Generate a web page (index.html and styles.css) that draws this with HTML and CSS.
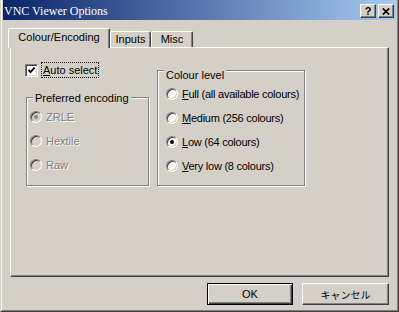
FILE: index.html
```html
<!DOCTYPE html>
<html lang="en">
<head>
    <meta charset="UTF-8">
    <title>VNC Viewer Options</title>
    <link rel="stylesheet" href="styles.css">
</head>
<body>
    <div class="window">
        <div class="frame">
            <div class="titlebar">
                <span class="title">VNC Viewer Options</span>
                <div class="caption-buttons">
                    <span class="cap-btn">?</span>
                    <span class="cap-btn">
                        <svg width="8" height="7" viewBox="0 0 8 7"><path d="M0.8 0.5 L7.2 6.5 M7.2 0.5 L0.8 6.5" stroke="#000" stroke-width="1.7" fill="none"/></svg>
                    </span>
                </div>
            </div>

            <div class="client">
                <div class="tabs">
                    <div class="tab active">Colour/Encoding</div>
                    <div class="tab">Inputs</div>
                    <div class="tab tab-misc">Misc</div>
                </div>

                <div class="panel">
                    <div class="col-left">
                        <div class="check-row">
                            <span class="checkbox">
                                <svg width="7" height="7" viewBox="0 0 7 7"><path d="M0.5 3 L2.5 5.2 L6.6 0.6" stroke="#000" stroke-width="1.9" fill="none"/></svg>
                            </span>
                            <span class="focus"><u>A</u>uto select</span>
                        </div>

                        <div class="group group-enc">
                            <div class="legend">Preferred encoding</div>
                            <div class="opt disabled"><span class="radio on"></span>ZRLE</div>
                            <div class="opt disabled"><span class="radio"></span>Hextile</div>
                            <div class="opt disabled"><span class="radio"></span>Raw</div>
                        </div>
                    </div>

                    <div class="col-right">
                        <div class="group group-colour">
                            <div class="legend">Colour level</div>
                            <div class="opt"><span class="radio"></span><span><u>F</u>ull (all available colours)</span></div>
                            <div class="opt"><span class="radio"></span><span><u>M</u>edium (256 colours)</span></div>
                            <div class="opt"><span class="radio on"></span><span><u>L</u>ow (64 colours)</span></div>
                            <div class="opt"><span class="radio"></span><span><u>V</u>ery low (8 colours)</span></div>
                        </div>
                    </div>
                </div>

                <div class="buttons">
                    <div class="btn default">OK</div>
                    <div class="btn btn-jp">キャンセル</div>
                </div>
            </div>
        </div>
    </div>
</body>
</html>
```

FILE: styles.css
```css
body {
    margin: 0;
    font-family: "Liberation Sans", Arial, sans-serif;
    font-size: 11px;
    color: #000;
    background: #d4d0c8;
}
.window {
    width: 399px;
    height: 312px;
    box-sizing: border-box;
    border-left: 1px solid #d4d0c8;
    border-right: 1px solid #404040;
    border-bottom: 1px solid #404040;
}
.frame {
    height: 100%;
    box-sizing: border-box;
    border-left: 1px solid #fff;
    border-right: 1px solid #808080;
    border-bottom: 1px solid #808080;
    padding: 0 1px 1px;
}
.titlebar {
    height: 20px;
    display: flex;
    justify-content: space-between;
    padding: 0 2px 0 1px;
    background: linear-gradient(90deg, #0a246a, #a6caf0);
}
.title {
    color: #fff;
    font-family: "Liberation Serif", "Times New Roman", serif;
    font-size: 12px;
    line-height: 20px;
    padding-top: 1px;
}
.caption-buttons {
    display: flex;
    gap: 2px;
    align-self: flex-end;
    margin-bottom: 2px;
}
.cap-btn {
    width: 16px;
    height: 14px;
    box-sizing: border-box;
    border: 1px solid;
    border-color: #fff #404040 #404040 #fff;
    box-shadow: inset -1px -1px #808080;
    background: #d4d0c8;
    display: flex;
    align-items: center;
    justify-content: center;
    font-weight: bold;
    font-size: 11px;
    line-height: 1;
}
.client {
    padding: 8px 7px 0;
}
.tabs {
    display: flex;
    align-items: flex-end;
    height: 19px;
}
.tab {
    width: 41px;
    height: 16px;
    box-sizing: border-box;
    text-align: center;
    line-height: 15px;
    border: 1px solid;
    border-bottom: none;
    border-color: #fff #404040 transparent #fff;
    box-shadow: inset -1px 0 #808080;
    border-radius: 2px 2px 0 0;
    background: #d4d0c8;
}
.tab-misc {
    width: 42px;
}
.tab.active {
    width: 102px;
    height: 20px;
    margin: 0 0 -1px -2px;
    line-height: 16px;
    position: relative;
    z-index: 1;
}
.panel {
    height: 230px;
    box-sizing: border-box;
    border: 1px solid;
    border-color: #fff #404040 #404040 #fff;
    box-shadow: inset -1px -1px #808080;
    display: flex;
    padding: 14px 0 0 14px;
}
.col-left {
    width: 124px;
}
.col-right {
    margin-left: 8px;
}
.check-row {
    display: flex;
    align-items: center;
    height: 16px;
}
.checkbox,
.radio {
    box-sizing: border-box;
    border: 1px solid;
    border-color: #808080 #fff #fff #808080;
    box-shadow: inset 1px 1px #404040, inset -1px -1px #d4d0c8;
    background: #fff;
    display: flex;
    align-items: center;
    justify-content: center;
    flex-shrink: 0;
}
.checkbox {
    width: 13px;
    height: 13px;
    margin-right: 3px;
}
.focus {
    border: 1px dotted #000;
    padding: 0 1px;
    line-height: 14px;
}
.group {
    box-sizing: border-box;
    border: 1px solid #808080;
    box-shadow: inset 1px 1px #fff, 1px 1px #fff;
}
.group-enc {
    width: 123px;
    height: 89px;
    margin: 19px 0 0 1px;
    padding-top: 1px;
}
.group-colour {
    width: 148px;
    height: 116px;
    margin-top: 8px;
    padding-top: 5px;
}
.legend {
    display: table;
    margin: -7px 0 0 6px;
    padding: 0 2px;
    background: #d4d0c8;
    line-height: 13px;
}
.opt {
    display: flex;
    align-items: center;
    height: 24px;
    white-space: nowrap;
}
.group-enc .opt {
    padding-left: 3px;
}
.group-colour .opt {
    padding-left: 8px;
    letter-spacing: -0.25px;
}
.radio {
    width: 12px;
    height: 12px;
    border-radius: 50%;
    margin-right: 4px;
}
.radio.on::after {
    content: "";
    width: 4px;
    height: 4px;
    border-radius: 50%;
    background: #000;
}
.disabled {
    color: #808080;
    text-shadow: 1px 1px 0 #fff;
}
.disabled .radio {
    background: #d4d0c8;
}
.disabled .radio.on::after {
    background: #808080;
}
.buttons {
    display: flex;
    justify-content: flex-end;
    gap: 9px;
    margin-top: 6px;
}
.btn {
    width: 87px;
    height: 22px;
    box-sizing: border-box;
    border: 1px solid;
    border-color: #fff #404040 #404040 #fff;
    box-shadow: inset -1px -1px #808080;
    display: flex;
    align-items: center;
    justify-content: center;
}
.btn.default {
    width: 86px;
    border-color: #000;
    box-shadow: inset 1px 1px #fff, inset -1px -1px #404040, inset -2px -2px #808080;
}
.btn-jp {
    font-family: "Liberation Sans", "Noto Sans CJK JP", sans-serif;
    font-size: 10px;
}
```
